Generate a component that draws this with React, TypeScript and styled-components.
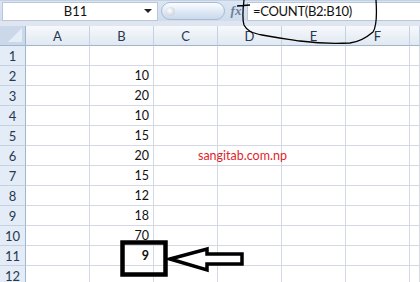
import React from 'react'
import styled, { createGlobalStyle } from 'styled-components'

const GlobalStyle = createGlobalStyle`
    html, body {
        margin: 0;
        padding: 0;
        background: #fff;
        overflow: hidden;
    }
    body {
        font-family: Lato, "Liberation Sans", sans-serif;
    }
`

const columns = ['A', 'B', 'C', 'D', 'E', 'F', '']
const values: Record<number, string> = {
    2: '10', 3: '20', 4: '10', 5: '15', 6: '20',
    7: '15', 8: '12', 9: '18', 10: '70', 11: '9',
}
const rows = Array.from({ length: 12 }, (_, i) => i + 1)

const App = () => {
    return (
        <Screen>
            <GlobalStyle />
            <Toolbar>
                <NameBox>
                    <span>B11</span>
                    <DropArrow />
                </NameBox>
                <Grip>
                    <GripDot />
                </Grip>
                <FxLabel>fx</FxLabel>
                <FormulaInput>=COUNT(B2:B10)</FormulaInput>
            </Toolbar>
            <Strip />
            <Sheet>
                <Corner />
                {columns.map((c, i) => (
                    <ColHeader key={i}>{c}</ColHeader>
                ))}
                {rows.map(r => (
                    <React.Fragment key={r}>
                        <RowHeader>{r}</RowHeader>
                        {columns.map((c, i) => (
                            <Cell key={i} bold={r === 11}>
                                {c === 'B' && values[r]}
                                {c === 'C' && r === 6 && <Watermark>sangitab.com.np</Watermark>}
                            </Cell>
                        ))}
                    </React.Fragment>
                ))}
            </Sheet>
            <Annotations width="420" height="282" viewBox="0 0 420 282">
                <path
                    d="M237 6 L250 5 M244 0 C243 8 242 18 244 25 C247 31 252 33 262 35 C272 37 287 39 300 41 C315 43 335 44 350 43 C358 42 366 38 373 32 C377 26 377 15 376 0"
                    fill="none" stroke="#000" strokeWidth="1.3"
                />
                <rect x="122.5" y="242.5" width="43" height="32" fill="none" stroke="#000" strokeWidth="4.5" />
                <path
                    d="M170 259 L207 249 L207 254 L242 254 L242 264 L207 264 L207 270 Z"
                    fill="#fff" stroke="#000" strokeWidth="3.5" strokeLinejoin="miter"
                />
            </Annotations>
        </Screen>
    )
}

const Screen = styled.div`
    position: relative;
    width: 420px;
    height: 282px;
    overflow: hidden;
    background: #fff;
`

const Toolbar = styled.div`
    height: 21px;
    display: flex;
    align-items: center;
    padding-left: 2px;
    box-sizing: border-box;
    background: linear-gradient(#dbe6f4, #cfdcec);
    border-top: 1px solid #c3d1e3;
`

const NameBox = styled.div`
    width: 156px;
    height: 19px;
    box-sizing: border-box;
    background: #fff;
    border: 1px solid #b9c7d9;
    display: flex;
    align-items: center;
    font-size: 13px;
    color: #111;
    span {
        flex: 1;
        text-align: center;
        padding-left: 4px;
    }
`

const DropArrow = styled.div`
    width: 0;
    height: 0;
    margin-right: 5px;
    border-left: 4px solid transparent;
    border-right: 4px solid transparent;
    border-top: 4px solid #222;
`

const Grip = styled.div`
    width: 64px;
    height: 18px;
    margin-left: 3px;
    border-radius: 9px;
    border: 1px solid #a9bbd3;
    box-sizing: border-box;
    background: linear-gradient(#fbfdff, #dbe6f3 60%, #cbd9ec);
    display: flex;
    align-items: center;
    padding-left: 4px;
`

const GripDot = styled.div`
    width: 9px;
    height: 9px;
    border-radius: 50%;
    background: radial-gradient(circle at 40% 40%, #ffffff, #b9c4d2);
`

const FxLabel = styled.div`
    width: 22px;
    text-align: center;
    font-family: "Liberation Serif", serif;
    font-style: italic;
    font-weight: bold;
    font-size: 13px;
    color: #6d7f99;
`

const FormulaInput = styled.div`
    flex: 1;
    height: 19px;
    box-sizing: border-box;
    background: #fff;
    border: 1px solid #b9c7d9;
    border-right: none;
    padding-left: 5px;
    font-size: 13px;
    letter-spacing: -0.3px;
    line-height: 17px;
    color: #111;
`

const Strip = styled.div`
    height: 5px;
    background: #dfe6ef;
`

const Sheet = styled.div`
    display: grid;
    grid-template-columns: 26px repeat(6, 64px) 1fr;
    grid-auto-rows: 20px;
`

const Corner = styled.div`
    position: relative;
    background: #cbd8ea;
    border-right: 1px solid #9eb6ce;
    border-bottom: 1px solid #9eb6ce;
    &::after {
        content: '';
        position: absolute;
        right: 3px;
        bottom: 3px;
        border-left: 14px solid transparent;
        border-bottom: 14px solid #e5edf7;
    }
`

const ColHeader = styled.div`
    background: linear-gradient(#f6f9fc, #e1e8f1);
    border-right: 1px solid #c5d1e0;
    border-bottom: 1px solid #9eb6ce;
    display: flex;
    align-items: center;
    justify-content: center;
    font-size: 13px;
    color: #27384f;
`

const RowHeader = styled.div`
    background: #e4ecf7;
    border-right: 1px solid #9eb6ce;
    border-bottom: 1px solid #c5d1e0;
    display: flex;
    align-items: center;
    justify-content: center;
    font-size: 13px;
    color: #27384f;
`

const Cell = styled.div<{ bold?: boolean }>`
    border-right: 1px solid #d4d9e3;
    border-bottom: 1px solid #d4d9e3;
    display: flex;
    align-items: center;
    justify-content: flex-end;
    padding-right: 4px;
    font-size: 12.5px;
    font-weight: ${p => (p.bold ? 'bold' : 'normal')};
    color: #111;
    overflow: visible;
    white-space: nowrap;
    position: relative;
`

const Watermark = styled.span`
    position: absolute;
    left: 44px;
    top: 2px;
    z-index: 2;
    line-height: 16px;
    color: #e21f2b;
    font-size: 12.5px;
`

const Annotations = styled.svg`
    position: absolute;
    left: 0;
    top: 0;
    z-index: 3;
    pointer-events: none;
`

export default App
